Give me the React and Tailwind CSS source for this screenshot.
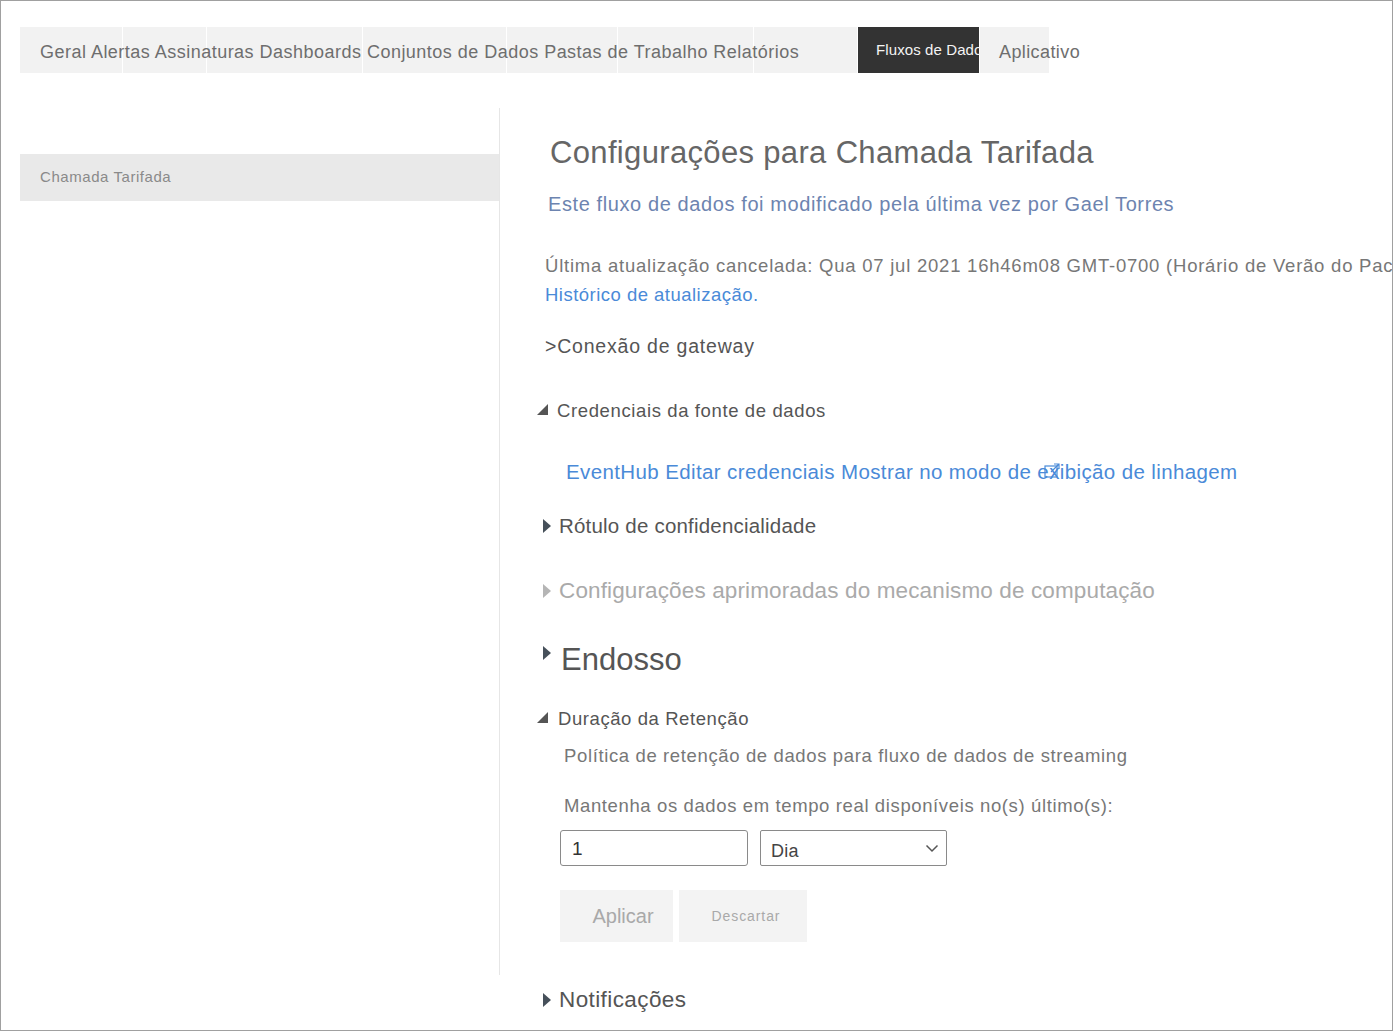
import React from "react";

const font = { fontFamily: '"Liberation Sans", Arial, sans-serif' };

function Expanded({ color = "#555" }) {
  return (
    <svg width="11" height="11" viewBox="0 0 11 11" className="shrink-0">
      <polygon points="11,0 11,11 0,11" fill={color} />
    </svg>
  );
}

function Collapsed({ color = "#46505a" }) {
  return (
    <svg width="8" height="14" viewBox="0 0 8 14" className="shrink-0">
      <polygon points="0,0 8,7 0,14" fill={color} />
    </svg>
  );
}

function ExternalIcon() {
  return (
    <svg width="17" height="15" viewBox="0 0 17 15" fill="none" stroke="#4a8ad8" strokeWidth="1.2">
      <rect x="1" y="3" width="12" height="11" />
      <path d="M7 9 L15 1 M10 1 H15 V6" />
    </svg>
  );
}

const tabWidths = [102, 83, 155, 143, 110, 135, 103];

export default function App() {
  return (
    <div
      className="w-[1393px] h-[1031px] border border-[#a0a0a0] bg-white overflow-hidden box-border"
      style={font}
    >
      {/* top tab strip */}
      <div className="relative ml-[19px] mt-[26px] h-[46px] flex">
        {tabWidths.map((w, i) => (
          <div key={i} style={{ width: w }} className="h-full bg-[#f2f2f2] mr-px" />
        ))}
        <div className="relative h-full w-[121px] bg-[#333333] mr-px">
          <span className="absolute left-[18px] top-0 h-full flex items-center whitespace-nowrap text-[15px] text-[#f4f4f4] tracking-[0.1px]">
            Fluxos de Dados
          </span>
        </div>
        <div className="h-full w-[69px] bg-[#f2f2f2] flex items-center pl-[19px] pt-[4px] whitespace-nowrap text-[18px] tracking-[0.4px] text-[#6e6e6e] relative z-10">
          Aplicativo
        </div>
        <span className="absolute left-[20px] top-[4px] h-[42px] flex items-center whitespace-nowrap text-[18px] tracking-[0.48px] text-[#6e6e6e]">
          Geral Alertas Assinaturas Dashboards Conjuntos de Dados Pastas de Trabalho Relatórios
        </span>
      </div>

      <div className="flex items-start mt-[35px]">
        {/* left navigation */}
        <div className="ml-[19px] w-[480px] h-[867px] border-r border-[#e6e6e6] shrink-0">
          <div className="mt-[46px] h-[47px] bg-[#e9e9e9] flex items-center pl-[20px] text-[15px] tracking-[0.56px] text-[#8a8a8a]">
            Chamada Tarifada
          </div>
        </div>

        {/* settings panel */}
        <div className="flex-1 min-w-0 pl-[45px] whitespace-nowrap">
          <div className="mt-[25px] h-[40px] flex items-center pl-[5px] text-[31px] tracking-[0.34px] text-[#666]">
            Configurações para Chamada Tarifada
          </div>
          <div className="mt-[16px] h-[30px] flex items-center pl-[3px] text-[20px] tracking-[0.6px] text-[#6d84b0]">
            Este fluxo de dados foi modificado pela última vez por Gael Torres
          </div>
          <div className="mt-[32px] h-[29px] flex items-center text-[18.5px] tracking-[0.77px] text-[#777]">
            Última atualização cancelada: Qua 07 jul 2021 16h46m08 GMT-0700 (Horário de Verão do Pacífico)
          </div>
          <div className="h-[29px] flex items-center text-[18.5px] tracking-[0.48px] text-[#4a8ad8]">
            Histórico de atualização.
          </div>
          <div className="mt-[23px] h-[30px] flex items-center text-[19.5px] tracking-[0.8px] text-[#555]">
            &gt;Conexão de gateway
          </div>
          <div className="mt-[34px] h-[30px] flex items-center -ml-[8px] gap-[9px] text-[18.5px] tracking-[0.62px] text-[#555]">
            <span className="-mt-[3px]"><Expanded /></span>
            <span>Credenciais da fonte de dados</span>
          </div>
          <div className="mt-[31px] h-[30px] flex items-center pl-[21px] text-[20.5px] tracking-[0.38px] text-[#4a8ad8]">
            <span>EventHub Editar credenciais Mostrar no modo de e</span>
            <span className="relative">
              xibição de linhagem
              <span className="absolute -left-[5px] top-[6px]">
                <ExternalIcon />
              </span>
            </span>
          </div>
          <div className="mt-[24px] h-[30px] flex items-center -ml-[2px] gap-[8px] text-[20.5px] tracking-[0.2px] text-[#555]">
            <Collapsed />
            <span>Rótulo de confidencialidade</span>
          </div>
          <div className="mt-[35px] h-[30px] flex items-center -ml-[2px] gap-[8px] text-[22.5px] tracking-[0.13px] text-[#aaa]">
            <Collapsed color="#b5b5b5" />
            <span>Configurações aprimoradas do mecanismo de computação</span>
          </div>
          <div className="mt-[34px] h-[40px] flex items-center -ml-[2px] gap-[10px] text-[31px] text-[#555]">
            <span className="-mt-[14px]"><Collapsed /></span>
            <span>Endosso</span>
          </div>
          <div className="mt-[24px] h-[30px] flex items-center -ml-[8px] gap-[10px] text-[18.5px] tracking-[0.58px] text-[#555]">
            <span className="-mt-[3px]"><Expanded /></span>
            <span>Duração da Retenção</span>
          </div>
          <div className="mt-[7px] h-[30px] flex items-center pl-[19px] text-[18.5px] tracking-[0.63px] text-[#777]">
            Política de retenção de dados para fluxo de dados de streaming
          </div>
          <div className="mt-[20px] h-[30px] flex items-center pl-[19px] text-[18.5px] tracking-[0.62px] text-[#777]">
            Mantenha os dados em tempo real disponíveis no(s) último(s):
          </div>
          <div className="mt-[9px] h-[36px] flex items-center pl-[15px] gap-[12px]">
            <div className="w-[188px] h-[36px] border border-[#8a8a8a] rounded-[3px] flex items-center pl-[11px] pt-[3px] text-[19px] text-[#333]">
              1
            </div>
            <div className="w-[187px] h-[36px] border border-[#8a8a8a] rounded-[2px] flex items-center justify-between pl-[10px] pr-[7px] text-[18px] tracking-[0.3px] text-[#444]">
              <span className="mt-[6px]">Dia</span>
              <svg width="14" height="9" viewBox="0 0 14 9" fill="none" stroke="#555" strokeWidth="1.5">
                <path d="M1.5 1.5 L7 7 L12.5 1.5" />
              </svg>
            </div>
          </div>
          <div className="mt-[24px] h-[52px] flex pl-[15px] gap-[6px]">
            <div className="w-[113px] h-full bg-[#f3f3f3] flex items-center justify-center pl-[13px] text-[20px] text-[#a9a9a9]">
              Aplicar
            </div>
            <div className="w-[128px] h-full bg-[#f3f3f3] flex items-center justify-center pl-[6px] text-[14px] tracking-[0.9px] text-[#a9a9a9]">
              Descartar
            </div>
          </div>
          <div className="mt-[43px] h-[30px] flex items-center -ml-[2px] gap-[8px] text-[22.5px] tracking-[0.4px] text-[#555]">
            <Collapsed />
            <span>Notificações</span>
          </div>
        </div>
      </div>
    </div>
  );
}
